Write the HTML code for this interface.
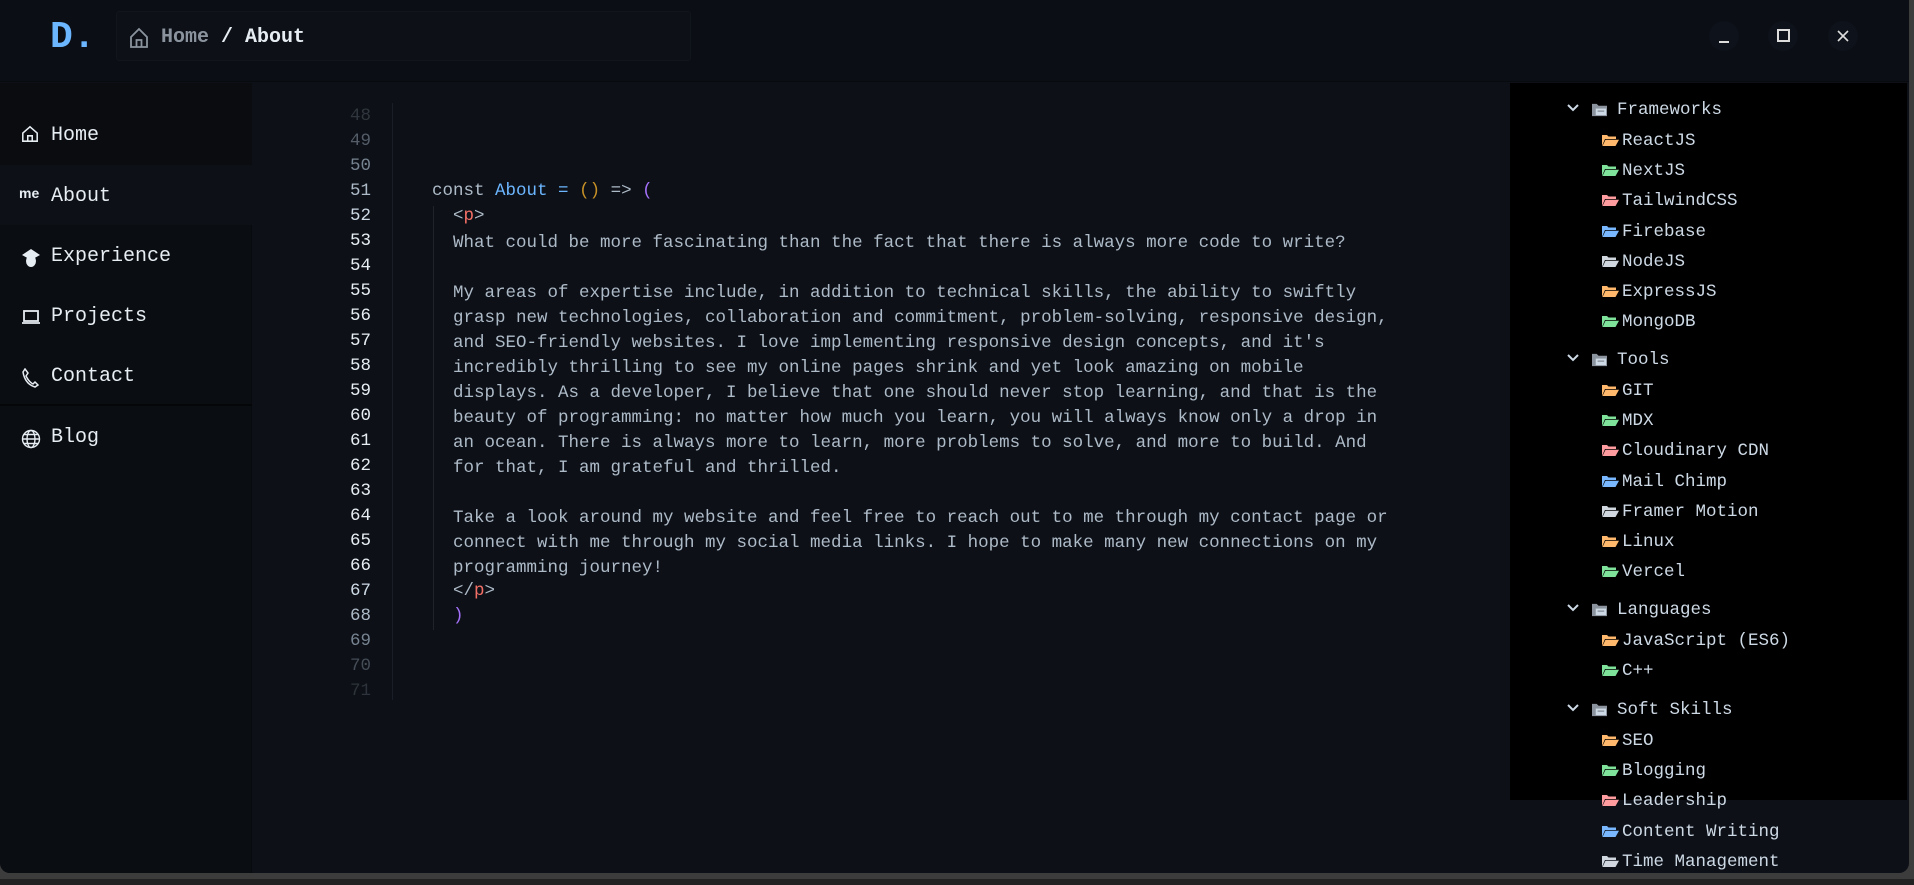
<!DOCTYPE html>
<html><head><meta charset="utf-8"><style>
*{margin:0;padding:0;box-sizing:border-box}
body{width:1914px;height:885px;background:#222;overflow:hidden;font-family:"Liberation Mono",monospace;position:relative}
#bg{position:absolute;left:0;top:0;width:1914px;height:879px;background:#3c3c3c}
#app{position:absolute;left:0;top:0;width:1909px;height:873px;background:#0d1017;border-radius:0 0 10px 10px;overflow:hidden}
#top{position:absolute;left:0;top:0;width:100%;height:82px;background:#0b0e14;border-bottom:1px solid #080a0e}
#logo{position:absolute;left:50px;top:16px;font-size:38px;font-weight:bold;color:#6cb6ff}
#crumb{position:absolute;left:116px;top:11px;width:575px;height:50px;background:#0d1017;border:1px solid #11151c;border-radius:3px}
#crumb .t{position:absolute;left:44px;top:14px;font-size:20px;font-weight:bold;color:#e6edf3}
.wb{position:absolute;top:21px;width:30px;height:30px;border-radius:50%;background:#0e121a}
#side{position:absolute;left:0;top:83px;width:252px;height:790px;background:#0a0d12;border-right:1px solid #080a0e}
.si{position:absolute;left:0;width:252px;height:60px;font-size:20px;color:#e6edf3}
.si span{position:absolute;left:51px;top:20px}
.si svg{position:absolute;left:21px;top:23px}
.ln{position:absolute;left:300px;width:71px;text-align:right;font-size:17.5px}
.cd{position:absolute;font-size:17.5px;color:#adbac7;white-space:pre}
#tree{position:absolute;left:1510px;top:83px;width:397px;height:717px;background:#000}
.tr{position:absolute;font-size:17.5px;color:#cdd9e5;white-space:pre}
</style></head><body>
<div id="bg"></div>
<div id="app">
<div id="top">
<div id="logo">D.</div>
<div id="crumb">
<svg style="position:absolute;left:12px;top:15px" width="20" height="22" viewBox="0 0 20 22" fill="none" stroke="#8b949e" stroke-width="1.8"><path d="M2 10 L10 2 L18 10 V20 H2 Z"/><path d="M7.5 20 V13 H12.5 V20"/></svg>
<div class="t"><span style="color:#8b949e">Home</span> / About</div>
</div>
<div class="wb" style="left:1709px"><div style="position:absolute;left:10px;top:20px;width:10px;height:2px;background:#ddd"></div></div>
<div class="wb" style="left:1768px"><div style="position:absolute;left:9px;top:8px;width:13px;height:13px;border:2px solid #ddd"></div></div>
<div class="wb" style="left:1828px"><svg style="position:absolute;left:9px;top:9px" width="12" height="12" viewBox="0 0 12 12" stroke="#ddd" stroke-width="1.6"><path d="M1 1L11 11M11 1L1 11"/></svg></div>
</div>

<div id="side">
<div class="si" style="top:0;height:82px;background:#0a0c10"><svg style="top:42px" width="18" height="18" viewBox="0 0 20 20" fill="none" stroke="#e6edf3" stroke-width="1.7"><path d="M2 9 L10 2 L18 9 V18 H2 Z"/><path d="M7.5 18 V12 H12.5 V18"/></svg><span style="top:41px">Home</span></div>
<div class="si" style="top:82px;background:#0d1017"><b style="position:absolute;left:19px;top:20px;font-size:14px;font-family:'Liberation Sans',sans-serif">me</b><span>About</span></div>
<div class="si" style="top:142px"><svg width="20" height="20" viewBox="0 0 20 20" fill="#e6edf3"><path d="M10 1 L19 7 L10 12 L1 7 Z"/><ellipse cx="10" cy="13" rx="5" ry="6"/></svg><span>Experience</span></div>
<div class="si" style="top:202px"><svg width="20" height="18" viewBox="0 0 20 18" fill="none" stroke="#e6edf3" stroke-width="1.8"><rect x="3" y="3" width="14" height="10"/><path d="M1 15 H19"/></svg><span>Projects</span></div>
<div class="si" style="top:262px"><svg width="18" height="20" viewBox="0 0 18 20" fill="none" stroke="#e6edf3" stroke-width="1.5"><path d="M4 1 L7 5 L5 8 Q8 14 12 16 L14 14 L17 17 L14 19 Q4 16 2 4 Z"/></svg><span>Contact</span></div>
<div style="position:absolute;left:0;top:321px;width:252px;height:2px;background:#050608"></div>
<div class="si" style="top:323px"><svg width="20" height="20" viewBox="0 0 20 20" fill="none" stroke="#e6edf3" stroke-width="1.4"><circle cx="10" cy="10" r="8.5"/><ellipse cx="10" cy="10" rx="4" ry="8.5"/><path d="M1.5 10H18.5M3 5.5H17M3 14.5H17"/></svg><span>Blog</span></div>
</div>

<div style="position:absolute;left:392px;top:103px;width:1px;height:597px;background:#1a1f27"></div>
<div style="position:absolute;left:433px;top:206px;width:1px;height:424px;background:#1f242c"></div>

<div class="ln" style="top:106px;color:#30363d">48</div>
<div class="ln" style="top:131px;color:#545d68">49</div>
<div class="ln" style="top:156px;color:#768390">50</div>
<div class="ln" style="top:181px;color:#adbac7">51</div>
<div class="ln" style="top:206px;color:#cdd9e5">52</div>
<div class="ln" style="top:231px;color:#e6edf3">53</div>
<div class="ln" style="top:256px;color:#e6edf3">54</div>
<div class="ln" style="top:281px;color:#e6edf3">55</div>
<div class="ln" style="top:306px;color:#e6edf3">56</div>
<div class="ln" style="top:331px;color:#e6edf3">57</div>
<div class="ln" style="top:356px;color:#e6edf3">58</div>
<div class="ln" style="top:381px;color:#e6edf3">59</div>
<div class="ln" style="top:406px;color:#e6edf3">60</div>
<div class="ln" style="top:431px;color:#e6edf3">61</div>
<div class="ln" style="top:456px;color:#e6edf3">62</div>
<div class="ln" style="top:481px;color:#e6edf3">63</div>
<div class="ln" style="top:506px;color:#e6edf3">64</div>
<div class="ln" style="top:531px;color:#e6edf3">65</div>
<div class="ln" style="top:556px;color:#e6edf3">66</div>
<div class="ln" style="top:581px;color:#cdd9e5">67</div>
<div class="ln" style="top:606px;color:#adbac7">68</div>
<div class="ln" style="top:631px;color:#768390">69</div>
<div class="ln" style="top:656px;color:#444c56">70</div>
<div class="ln" style="top:681px;color:#2d333b">71</div>

<div class="cd" style="left:432px;top:181px">const <span style="color:#6cb6ff">About</span> <span style="color:#6cb6ff">=</span> <span style="color:#c69026">()</span> =&gt; <span style="color:#a371f7">(</span></div>
<div class="cd" style="left:453px;top:206px">&lt;<span style="color:#f47067">p</span>&gt;</div>
<div class="cd" style="left:453px;top:231px;line-height:25px">What could be more fascinating than the fact that there is always more code to write?

My areas of expertise include, in addition to technical skills, the ability to swiftly
grasp new technologies, collaboration and commitment, problem-solving, responsive design,
and SEO-friendly websites. I love implementing responsive design concepts, and it's
incredibly thrilling to see my online pages shrink and yet look amazing on mobile
displays. As a developer, I believe that one should never stop learning, and that is the
beauty of programming: no matter how much you learn, you will always know only a drop in
an ocean. There is always more to learn, more problems to solve, and more to build. And
for that, I am grateful and thrilled.

Take a look around my website and feel free to reach out to me through my contact page or
connect with me through my social media links. I hope to make many new connections on my
programming journey!</div>
<div class="cd" style="left:453px;top:581px">&lt;/<span style="color:#f47067">p</span>&gt;</div>
<div class="cd" style="left:453px;top:606px;color:#a371f7">)</div>

<div id="tree"></div>
<svg width="0" height="0" style="position:absolute"><defs>
<symbol id="fo" viewBox="0 0 18 14"><path d="M1 2 H6 L7.5 3.5 H15 V6 H4 L1 13 Z" fill="currentColor"/><path d="M4.5 6.8 H18 L14.5 13 H1.5 Z" fill="currentColor"/></symbol>
<symbol id="fc" viewBox="0 0 18 16"><path d="M1 2 H6 L8 4 H17 V15 H1 Z" fill="#8b949e"/><rect x="5" y="7" width="11" height="7" fill="#cdd9e5"/><rect x="7" y="9" width="7" height="1.5" fill="#8b949e"/></symbol>
<symbol id="ch" viewBox="0 0 12 8"><path d="M1 1 L6 6 L11 1" fill="none" stroke="#cdd9e5" stroke-width="2"/></symbol>
</defs></svg>
<div id="treeitems"></div>
<script>
var d=[["Frameworks",110,[["ReactJS","#ffb86c"],["NextJS","#7ee29a"],["TailwindCSS","#ff9ca0"],["Firebase","#79b8ff"],["NodeJS","#d0d7de"],["ExpressJS","#ffb86c"],["MongoDB","#7ee29a"]]],
["Tools","360",[["GIT","#ffb86c"],["MDX","#7ee29a"],["Cloudinary CDN","#ff9ca0"],["Mail Chimp","#79b8ff"],["Framer Motion","#d0d7de"],["Linux","#ffb86c"],["Vercel","#7ee29a"]]],
["Languages",610,[["JavaScript (ES6)","#ffb86c"],["C++","#7ee29a"]]],
["Soft Skills",710,[["SEO","#ffb86c"],["Blogging","#7ee29a"],["Leadership","#ff9ca0"],["Content Writing","#79b8ff"],["Time Management","#d0d7de"]]]];
var h="";
d.forEach(function(g){var y=+g[1];
h+='<svg style="position:absolute;left:1567px;top:'+(y-6)+'px" width="12" height="8"><use href="#ch"/></svg>';
h+='<svg style="position:absolute;left:1591px;top:'+(y-8)+'px" width="17" height="15"><use href="#fc"/></svg>';
h+='<div class="tr" style="left:1617px;top:'+(y-10)+'px">'+g[0]+'</div>';
g[2].forEach(function(it,i){var yy=y+31+i*30.2;
h+='<svg style="position:absolute;left:1601px;top:'+(yy-8)+'px;color:'+it[1]+'" width="18" height="14"><use href="#fo"/></svg>';
h+='<div class="tr" style="left:1622px;top:'+(yy-10)+'px">'+it[0]+'</div>';});});
document.getElementById("treeitems").innerHTML=h;
</script>
</div>
<div style="position:absolute;left:1909px;top:0;width:5px;height:879px;background:#3c3c3c"></div>
</body></html>
